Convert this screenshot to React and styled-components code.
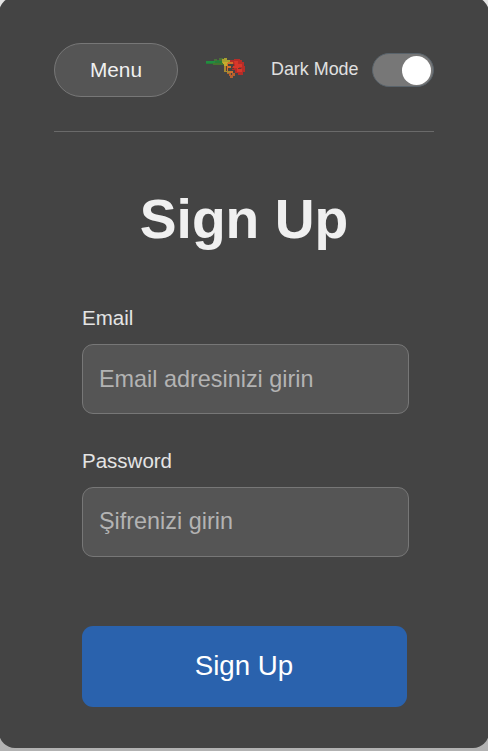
import React, { useState } from "react";
import styled, { createGlobalStyle } from "styled-components";

const GlobalStyle = createGlobalStyle`
  *, *::before, *::after { box-sizing: border-box; }
  html, body { height: 100%; }
  body {
    margin: 0;
    overflow: hidden;
    background: linear-gradient(#e4e4e4 0, #e4e4e4 50%, #b2b2b2 100%);
    font-family: "Liberation Sans", Arial, sans-serif;
  }
`;

const Card = styled.main`
  width: 490px;
  height: 751px;
  margin: -3px -1px 0;
  padding: 46px 55px 0;
  border-radius: 16px;
  background: #444;
  color: #f0f0f0;
`;

const Header = styled.header`
  display: flex;
  align-items: center;
  width: 380px;
  height: 89px;
  padding-bottom: 34px;
  border-bottom: 1px solid #6a6a6a;
`;

const MenuButton = styled.button`
  width: 124px;
  height: 54px;
  padding: 0;
  border: 1px solid #777;
  border-radius: 27px;
  background: #555;
  color: #f0f0f0;
  font: 20.8px "Liberation Sans", Arial, sans-serif;
`;

const Logo = styled.svg`
  flex: none;
  width: 42px;
  height: 24px;
  margin: 0 25px 4px 26px;
`;

const ThemeLabel = styled.span`
  width: 100.5px;
  padding-bottom: 3px;
  color: #e0e0e0;
  font-size: 17.9px;
  line-height: 20px;
  white-space: nowrap;
`;

const Switch = styled.button`
  display: flex;
  flex: none;
  align-items: center;
  justify-content: ${({ $on }) => ($on ? "flex-end" : "flex-start")};
  width: 62.5px;
  height: 34px;
  padding: 0 2px;
  border: 1px solid #59636b;
  border-radius: 17px;
  background: #777;
`;

const Knob = styled.span`
  width: 29px;
  height: 29px;
  border-radius: 50%;
  background: #fff;
`;

const Title = styled.h1`
  margin: 55px 0 0;
  font-size: 55.2px;
  line-height: 64px;
  text-align: center;
`;

const Form = styled.form`
  display: flex;
  flex-direction: column;
  align-items: flex-start;
  width: 327px;
  margin: 55px 0 0 28px;
`;

const Label = styled.label`
  margin-bottom: 14px;
  color: #e4e4e4;
  font-size: 20.5px;
  line-height: 24px;
`;

const Field = styled.input`
  width: 327px;
  height: 70px;
  margin-bottom: 35px;
  padding: ${({ $lowered }) => ($lowered ? "1px 16px 0" : "0 16px 1px")};
  border: 1px solid #777;
  border-radius: 11px;
  outline: none;
  background: #555;
  color: #f0f0f0;
  font: 23.4px "Liberation Sans", Arial, sans-serif;

  &::placeholder { color: #b3b3b3; opacity: 1; }
`;

const SubmitButton = styled.button`
  width: 325px;
  height: 81px;
  margin-top: 34px;
  padding: 0 1px 2px 0;
  border: 0;
  border-radius: 11px;
  background: #2a62ad;
  color: #fff;
  font: 27.7px "Liberation Sans", Arial, sans-serif;
`;

function PistolLogo() {
  return (
    <Logo viewBox="0 0 42 24" role="img" aria-label="Pistol">
      <path d="M2 5h8v-1h12v5H10V8H2z" fill="#277c39" />
      <path d="M2 5h9v2H2z" fill="#218d40" />
      <path d="M9 7h11v2H9z" fill="#45742f" />
      <path d="M10 3h3v2h-3zM15 2h4v3h-4z" fill="#496f39" />
      <path d="M18 3h2V2h3v2h4v3h-9z" fill="#a8a030" />
      <path d="M19 6h8v2h-4v2h-3V8h-1z" fill="#c7ab2d" />
      <path d="M26 4h4V3h6v1h2v2h2v4h1v6h-2v3h-5v-2h-3v-3h-3v-3h2V8h-4z" fill="#b62d28" />
      <path d="M30 5h4v3h4v3h-3v2h3v3h-5v-4h-4v-2h2z" fill="#d9372a" />
      <path d="M24 6h5v2h-5v2h3v2h-3v3h5v2h-6V7h1z" fill="#d5702a" />
      <path d="M20 10h2v5h4v2h-3v-1h-3z" fill="#a98a30" />
      <path d="M23 17h4v3h-2v-2h-2zM28 17h3v3h-2v2h-3v-3h2z" fill="#b7602e" />
      <path d="M22 10h1v4h-1zM29 8h1v2h-1zM28 12h2v1h-2zM34 12h3v1h-3z" fill="#653a2e" />
    </Logo>
  );
}

export default function App() {
  const [dark, setDark] = useState(true);

  return (
    <>
      <GlobalStyle />
      <Card>
        <Header>
          <MenuButton type="button">Menu</MenuButton>
          <PistolLogo />
          <ThemeLabel>Dark Mode</ThemeLabel>
          <Switch
            type="button"
            role="switch"
            aria-label="Dark Mode"
            aria-checked={dark}
            $on={dark}
            onClick={() => setDark(!dark)}
          >
            <Knob />
          </Switch>
        </Header>
        <Title>Sign Up</Title>
        <Form onSubmit={(event) => event.preventDefault()}>
          <Label htmlFor="email">Email</Label>
          <Field id="email" type="email" placeholder="Email adresinizi girin" $lowered />
          <Label htmlFor="password">Password</Label>
          <Field id="password" type="password" placeholder="Şifrenizi girin" />
          <SubmitButton type="submit">Sign Up</SubmitButton>
        </Form>
      </Card>
    </>
  );
}
